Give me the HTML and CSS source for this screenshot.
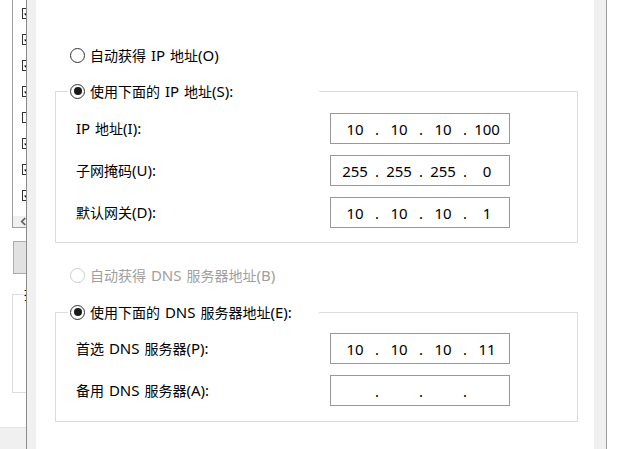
FILE: index.html
```html
<!DOCTYPE html>
<html lang="zh-CN">
<head>
<meta charset="utf-8">
<title>Internet 协议版本 4 (TCP/IPv4) 属性</title>
<link rel="stylesheet" href="styles.css">
</head>
<body>
<div class="screen">
  <aside class="backwin">
    <div class="list">
      <div class="chk on"><svg viewBox="0 0 11 11"><path d="M2 5.5 L4.5 8 L9 2.5" /></svg></div>
      <div class="chk on"><svg viewBox="0 0 11 11"><path d="M2 5.5 L4.5 8 L9 2.5" /></svg></div>
      <div class="chk on"><svg viewBox="0 0 11 11"><path d="M2 5.5 L4.5 8 L9 2.5" /></svg></div>
      <div class="chk on"><svg viewBox="0 0 11 11"><path d="M2 5.5 L4.5 8 L9 2.5" /></svg></div>
      <div class="chk"></div>
      <div class="chk on"><svg viewBox="0 0 11 11"><path d="M2 5.5 L4.5 8 L9 2.5" /></svg></div>
      <div class="chk on"><svg viewBox="0 0 11 11"><path d="M2 5.5 L4.5 8 L9 2.5" /></svg></div>
      <div class="chk on"><svg viewBox="0 0 11 11"><path d="M2 5.5 L4.5 8 L9 2.5" /></svg></div>
      <div class="hscroll"><svg class="arrow" viewBox="0 0 8 10"><path d="M6 1 L2 5 L6 9" /></svg></div>
    </div>
    <div class="btn"></div>
    <fieldset class="grp"><legend>描述</legend></fieldset>
    <div class="status"></div>
  </aside>

  <div class="dialog">
    <div class="panel">
      <div class="opt"><span class="radio"></span><span>自动获得<span class="lt"> IP </span>地址<span class="lt">(O)</span></span></div>

      <fieldset class="group g-ip">
        <legend class="opt"><span class="radio checked"></span><span>使用下面的<span class="lt"> IP </span>地址<span class="lt">(S):</span></span></legend>
        <div class="field">
          <label><span class="lt">IP </span>地址<span class="lt">(I):</span></label>
          <div class="ipbox"><span class="seg">10</span><span class="dot">.</span><span class="seg">10</span><span class="dot">.</span><span class="seg">10</span><span class="dot">.</span><span class="seg">100</span></div>
        </div>
        <div class="field">
          <label>子网掩码<span class="lt">(U):</span></label>
          <div class="ipbox"><span class="seg">255</span><span class="dot">.</span><span class="seg">255</span><span class="dot">.</span><span class="seg">255</span><span class="dot">.</span><span class="seg">0</span></div>
        </div>
        <div class="field">
          <label>默认网关<span class="lt">(D):</span></label>
          <div class="ipbox"><span class="seg">10</span><span class="dot">.</span><span class="seg">10</span><span class="dot">.</span><span class="seg">10</span><span class="dot">.</span><span class="seg">1</span></div>
        </div>
      </fieldset>

      <div class="opt disabled"><span class="radio"></span><span>自动获得<span class="lt"> DNS </span>服务器地址<span class="lt">(B)</span></span></div>

      <fieldset class="group g-dns">
        <legend class="opt"><span class="radio checked"></span><span>使用下面的<span class="lt"> DNS </span>服务器地址<span class="lt">(E):</span></span></legend>
        <div class="field">
          <label>首选<span class="lt"> DNS </span>服务器<span class="lt">(P):</span></label>
          <div class="ipbox"><span class="seg">10</span><span class="dot">.</span><span class="seg">10</span><span class="dot">.</span><span class="seg">10</span><span class="dot">.</span><span class="seg">11</span></div>
        </div>
        <div class="field">
          <label>备用<span class="lt"> DNS </span>服务器<span class="lt">(A):</span></label>
          <div class="ipbox"><span class="seg"></span><span class="dot">.</span><span class="seg"></span><span class="dot">.</span><span class="seg"></span><span class="dot">.</span><span class="seg"></span></div>
        </div>
      </fieldset>
    </div>
  </div>

  <div class="desk"></div>
</div>
</body>
</html>
```

FILE: styles.css
```css
* { box-sizing: border-box; }

html, body {
  margin: 0;
  padding: 0;
  background: #ffffff;
}

body {
  font-family: "Noto Sans", "Noto Sans CJK SC", sans-serif;
  font-size: 14px;
  color: #000000;
}

.lt {
  font-size: 15px;
  word-spacing: 1px;
}

.screen {
  display: flex;
  width: 627px;
  height: 449px;
  overflow: hidden;
}

/* ---------- window behind (left) ---------- */
.backwin {
  flex: 0 0 26px;
  width: 26px;
  height: 449px;
  overflow: hidden;
  display: flex;
  flex-direction: column;
  background: #ffffff;
}

.list {
  margin-left: 12px;
  width: 40px;
  height: 228px;
  border-left: 1px solid #a0a0a0;
  border-bottom: 1px solid #a0a0a0;
  padding: 8px 0 0 9px;
  display: flex;
  flex-direction: column;
  flex: 0 0 auto;
}

.chk {
  width: 11px;
  height: 11px;
  border: 1px solid #333333;
  margin-bottom: 15px;
  background: #ffffff;
  flex: 0 0 auto;
}

.chk svg {
  display: block;
  width: 9px;
  height: 9px;
}

.chk svg path {
  fill: none;
  stroke: #000000;
  stroke-width: 1.6;
}

.hscroll {
  margin-top: auto;
  margin-left: -9px;
  height: 23px;
  background: #f0f0f0;
  display: flex;
  align-items: center;
  padding-left: 7px;
}

.arrow {
  width: 7px;
  height: 9px;
}

.arrow path {
  fill: none;
  stroke: #606060;
  stroke-width: 2;
}

.btn {
  margin: 13px 0 0 13px;
  width: 40px;
  height: 33px;
  background: #e1e1e1;
  border: 1px solid #adadad;
  flex: 0 0 auto;
}

.grp {
  margin: 13px 0 0 12px;
  padding: 0 0 0 10px;
  width: 60px;
  height: 106px;
  border: 1px solid #dcdcdc;
  min-inline-size: 0;
  flex: 0 0 auto;
}

.grp legend {
  padding: 0 1px;
  font-size: 14px;
  line-height: 14px;
}

.status {
  margin-top: auto;
  height: 22px;
  background: #f0f0f0;
  border-top: 1px solid #e3e3e3;
}

/* ---------- dialog ---------- */
.dialog {
  flex: 0 0 581px;
  height: 449px;
  background: #f0f0f0;
  border-left: 1px solid #8c8c8c;
  border-right: 1px solid #9a9a9a;
  padding: 0 12px 0 9px;
}

.panel {
  height: 100%;
  background: #ffffff;
  padding: 45px 0 0 0;
}

.desk {
  flex: 1 1 auto;
  background: #ffffff;
}

/* radio rows */
.opt {
  display: flex;
  align-items: center;
  height: 20px;
  line-height: 20px;
  white-space: nowrap;
}

.panel > .opt {
  padding-left: 34px;
}

.radio {
  width: 15px;
  height: 15px;
  border: 1px solid #333333;
  border-radius: 50%;
  background: #ffffff;
  margin-right: 5px;
  display: flex;
  align-items: center;
  justify-content: center;
  flex: 0 0 auto;
}

.radio.checked::after {
  content: "";
  width: 8px;
  height: 8px;
  border-radius: 50%;
  background: #1a1a1a;
}

.opt.disabled {
  color: #a0a0a0;
}

.opt.disabled .radio {
  border-color: #cccccc;
}

/* group boxes */
.group {
  margin: 0 0 0 19px;
  width: 523px;
  border: 1px solid #dcdcdc;
  padding: 0 0 0 12px;
  min-inline-size: 0;
}

.group > legend {
  width: 251px;
  padding: 0 0 0 2px;
}

.g-ip {
  margin-top: 16px;
  padding-top: 12px;
  padding-bottom: 14px;
}

.g-ip + .opt {
  margin-top: 22px;
  padding-left: 34px;
}

.g-dns {
  margin-top: 17px;
  padding-top: 11px;
  padding-bottom: 15px;
}

.field {
  display: flex;
  align-items: center;
  margin-left: 8px;
  height: 31px;
}

.field + .field {
  margin-top: 11px;
}

.field label {
  flex: 0 0 254px;
  line-height: 20px;
}

.ipbox {
  display: flex;
  align-items: center;
  width: 180px;
  height: 31px;
  border: 1px solid #999999;
  padding-left: 4px;
  font-size: 15px;
  background: #ffffff;
}

.seg {
  width: 40px;
  text-align: center;
}

.dot {
  width: 4px;
  text-align: center;
}
```
